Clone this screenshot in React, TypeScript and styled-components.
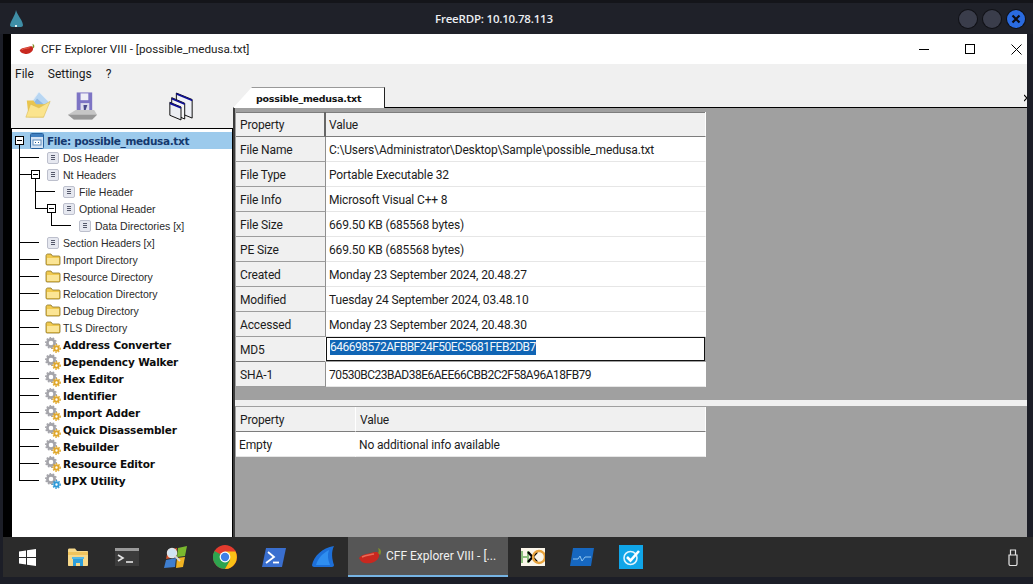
import { FC } from 'react';
import styled, { createGlobalStyle } from 'styled-components';

const GlobalStyle = createGlobalStyle`
  html, body {
    margin: 0;
    padding: 0;
    width: 1033px;
    height: 584px;
    overflow: hidden;
    background-color: #1c1e27;
  }
`;

const Screen = styled.div`
  width: 1033px;
  height: 584px;
  display: flex;
  flex-direction: column;
  background-color: #1c1e27;
  font-family: Roboto, 'Liberation Sans', sans-serif;
`;

const RdpBar = styled.header`
  height: 34px;
  flex-shrink: 0;
  display: grid;
  grid-template-columns: 425px auto 1fr;
  align-items: center;
  padding: 0 8px 0 10px;
  background-color: #1f2129;
  border-top: 3px solid #14151a;
  box-sizing: border-box;
`;

const RdpTitle = styled.div`
  color: #eceef2;
  font-family: 'Open Sans', sans-serif;
  font-size: 11.5px;
  font-weight: 600;
  letter-spacing: -0.2px;
`;

const RdpButtons = styled.div`
  display: flex;
  justify-content: flex-end;
  gap: 6px;
`;

const RdpButton = styled.div<{ $close?: boolean }>`
  width: 18px;
  height: 18px;
  border-radius: 50%;
  display: flex;
  align-items: center;
  justify-content: center;
  background-color: ${(p) => (p.$close ? '#2a6be0' : '#3a3d4b')};
  box-shadow: 0 0 0 1px #101116;
`;

const Middle = styled.div`
  height: 503px;
  flex-shrink: 0;
  display: flex;
`;

const LeftEdge = styled.div`
  width: 11px;
  background: linear-gradient(to right, #1c1e27 3px, #000 3px);
`;

const RightEdge = styled.div`
  width: 6px;
  background-color: #1c1e27;
`;

const AppWindow = styled.div`
  flex: 1;
  min-width: 0;
  display: flex;
  flex-direction: column;
  background-color: #f0f0f0;
  overflow: hidden;
`;

const TitleBar = styled.div`
  height: 30px;
  flex-shrink: 0;
  display: flex;
  align-items: center;
  padding-left: 8px;
  margin-right: -12px;
  background-color: #fff;
`;

const TitleText = styled.div`
  margin-left: 6px;
  flex: 1;
  font-size: 11.7px;
  color: #222;
`;

const WinButton = styled.div`
  width: 46px;
  height: 30px;
  display: flex;
  align-items: center;
  justify-content: center;
`;

const MenuBar = styled.nav`
  height: 20px;
  flex-shrink: 0;
  display: flex;
  align-items: center;
  gap: 14px;
  padding-left: 4px;
  font-size: 12px;
  color: #1a1a1a;
`;

const Body = styled.div`
  flex: 1;
  min-height: 0;
  display: flex;
`;

const LeftColumn = styled.div`
  width: 222px;
  flex-shrink: 0;
  display: flex;
  flex-direction: column;
`;

const Toolbar = styled.div`
  height: 44px;
  flex-shrink: 0;
  display: flex;
  align-items: center;
  padding-left: 13px;
  gap: 15px;
`;

const ToolSpacer = styled.div`
  width: 40px;
`;

const Tree = styled.div`
  flex: 1;
  background-color: #fff;
  border-top: 1px solid #000;
  border-left: 1px solid #000;
  border-right: 1px solid #000;
  padding-top: 3px;
  font-family: 'DejaVu Sans', sans-serif;
`;

const TreeRow = styled.div<{ $selected?: boolean }>`
  height: 17px;
  display: flex;
  align-items: center;
  background-color: ${(p) => (p.$selected ? '#9ccaec' : 'transparent')};
`;

const Guide = styled.span<{ $up?: boolean; $down?: boolean; $right?: boolean; $half?: boolean }>`
  position: relative;
  flex-shrink: 0;
  width: 16px;
  height: 17px;

  &::before {
    content: '';
    display: ${(p) => (p.$up || p.$down ? 'block' : 'none')};
    position: absolute;
    left: 7px;
    width: 1px;
    top: ${(p) => (p.$up ? '0' : '8px')};
    bottom: ${(p) => (p.$down ? '0' : '8px')};
    background-color: #000;
  }

  &::after {
    content: '';
    display: ${(p) => (p.$right || p.$half ? 'block' : 'none')};
    position: absolute;
    top: 8px;
    height: 1px;
    left: ${(p) => (p.$half ? '0' : '7px')};
    right: ${(p) => (p.$half ? '5px' : '0')};
    background-color: #000;
  }
`;

const Expander = styled.span`
  position: absolute;
  z-index: 1;
  left: 3px;
  top: 4px;
  width: 9px;
  height: 9px;
  box-sizing: border-box;
  border: 1px solid #000;
  background-color: #fff;

  &::after {
    content: '';
    position: absolute;
    left: 1px;
    right: 1px;
    top: 3px;
    height: 1px;
    background-color: #000;
  }
`;

const PlainLabel = styled.span`
  margin-left: 2px;
  white-space: nowrap;
  font-family: 'Liberation Sans', sans-serif;
  font-size: 10.5px;
  color: #2a2a2a;
`;

const ToolLabel = styled.span`
  margin-left: 2px;
  white-space: nowrap;
  font-size: 10.5px;
  font-weight: 700;
  letter-spacing: -0.15px;
  color: #0c0c0c;
`;

const RootLabel = styled.span`
  margin-left: 3px;
  white-space: nowrap;
  font-size: 10.5px;
  font-weight: 700;
  letter-spacing: -0.35px;
  color: #14386e;
`;

const RightColumn = styled.div`
  flex: 1;
  min-width: 0;
  display: flex;
  flex-direction: column;
`;

const TabStrip = styled.div`
  height: 24px;
  flex-shrink: 0;
  position: relative;
  display: flex;
  align-items: flex-end;
  border-bottom: 1px solid #000;
  box-sizing: border-box;
`;

const Tab = styled.div`
  width: 152px;
  height: 21px;
  margin-bottom: -1px;
  box-sizing: border-box;
  display: flex;
  align-items: center;
  padding: 1px 0 0 23px;
  font-family: 'DejaVu Sans', sans-serif;
  font-size: 9.5px;
  font-weight: 700;
  letter-spacing: -0.25px;
  color: #111;
  background-color: #fff;
  border-right: 1px solid #222;
  border-top: 1px solid #999;
  clip-path: polygon(0 100%, 19px 0, 100% 0, 100% 100%);
`;

const TabArrow = styled.span`
  position: absolute;
  right: 0;
  top: 10px;
  display: flex;
`;

const Panes = styled.div`
  flex: 1;
  min-height: 0;
  display: flex;
  flex-direction: column;
  background-color: #a0a0a0;
  border-left: 2px solid #3c3c3c;
`;

const TablePane = styled.div<{ $height: number; $top: number }>`
  height: ${(p) => p.$height}px;
  flex-shrink: 0;
  box-sizing: border-box;
  padding: ${(p) => p.$top}px 0 0 1px;
`;

const Splitter = styled.div`
  height: 6px;
  flex-shrink: 0;
  background-color: #f0f0f0;
`;

const Table = styled.div<{ $first: number }>`
  width: 470px;
  display: grid;
  grid-template-columns: ${(p) => p.$first}px 1fr;
  grid-auto-rows: 25px;
  font-size: 12px;
  letter-spacing: -0.14px;
  color: #1c1c1c;
`;

const Cell = styled.div<{ $shade?: boolean; $pad?: number }>`
  display: flex;
  align-items: center;
  box-sizing: border-box;
  white-space: nowrap;
  padding-top: 1px;
  padding-left: ${(p) => p.$pad ?? 3}px;
  background-color: ${(p) => (p.$shade ? '#f0f0f0' : '#fff')};
  border-bottom: 1px solid ${(p) => (p.$shade ? '#9d9d9d' : '#e6e6e6')};
  border-right: 1px solid ${(p) => (p.$shade ? '#8f8f8f' : '#fff')};
`;

const HeadCell = styled(Cell)`
  padding-top: 2px;
  background-color: #f0f0f0;
  border-bottom-color: #7d7d7d;
`;

const TopHeadCell = styled(HeadCell)`
  box-shadow: inset 0 1px 0 #7d7d7d;
`;

const TopKeyHeadCell = styled(TopHeadCell)`
  border-right: 2px solid #666;
`;

const EditCell = styled.div`
  box-sizing: border-box;
  padding: 2px 0 0 3px;
  border: 1px solid #111;
  background-color: #fff;
  margin: 0 1px 1px 0;
  line-height: 15px;
`;

const Hash = styled.span`
  letter-spacing: -0.5px;
`;

const Selected = styled(Hash)`
  display: inline-block;
  color: #f2f6fb;
  background-color: #1065b5;
`;

const Taskbar = styled.footer`
  height: 40px;
  flex-shrink: 0;
  margin-left: 3px;
  display: flex;
  background-color: #2b2b2b;
`;

const TaskSlot = styled.div`
  width: 49px;
  height: 40px;
  flex-shrink: 0;
  display: flex;
  align-items: center;
  justify-content: center;
`;

const StartSlot = styled(TaskSlot)`
  margin-right: 1px;
`;

const ActiveTask = styled.div`
  width: 160px;
  height: 40px;
  margin-left: 1px;
  flex-shrink: 0;
  box-sizing: border-box;
  display: flex;
  align-items: center;
  gap: 4px;
  padding-left: 10px;
  background-color: #565656;
  border-bottom: 2px solid #76b4e4;
  color: #f1f1f1;
  font-size: 12px;
  white-space: nowrap;
`;

const TaskTray = styled.div`
  flex: 1;
  display: flex;
  justify-content: flex-end;
  align-items: center;
  padding-right: 14px;
`;

const BottomEdge = styled.div`
  flex: 1;
  background-color: #1c1e27;
`;

const Chili: FC<{ size?: number }> = ({ size = 16 }) => (
  <svg width={size} height={size * 0.75} viewBox="0 0 24 18">
    <path d="M1 11c3-4 8-4 12-5 3-1 7-2 8 1 1 4-3 8-8 9-5 1-10 0-12-5z" fill="#c8281f" />
    <path d="M4 10c4-2 8-2 12-3" stroke="#ea6a55" strokeWidth="1.4" fill="none" />
    <path d="M20 6c1-1 1-3 0-5 3 1 4 4 2 7z" fill="#7f8f2c" />
  </svg>
);

const OpenFolder: FC = () => (
  <svg width="28" height="32" viewBox="0 0 30 32">
    <path d="M16 1l12 12-10 11L8 12z" fill="#b8d6f2" stroke="#e0ecf8" />
    <path d="M14 8l7 6-5 5-6-6z" fill="#8fb8e4" />
    <path d="M3 10h7l3 4h10l-2 14H5z" fill="#e9c54e" />
    <path d="M2 28l5-14 9 4 12-7-7 17z" fill="#fbe48d" stroke="#d9b94f" strokeWidth="0.6" />
  </svg>
);

const SaveDisk: FC = () => (
  <svg width="31" height="30" viewBox="0 0 32 30">
    <path d="M10 1h16v21H10z" fill="#7d74c4" />
    <path d="M14 2h8v7h-8z" fill="#eeeef6" />
    <path d="M14 12h9v10h-9z" fill="#dcdcec" />
    <path d="M17 14h4l-2 6h-1.500z" fill="#4a4a8c" />
    <path d="M1 24l8-5h19l3 5-5 5H7z" fill="#c6c6c6" />
    <path d="M7 29l-6-5h30l-5 5z" fill="#979797" />
  </svg>
);

const Windows: FC = () => (
  <svg width="26" height="30" viewBox="0 0 28 32">
    <g stroke="#000" strokeWidth="1" fill="#eef0f6">
      <path d="M9 2l17 7v20L9 22z" />
      <path d="M4 7l14 6v17L4 24z" fill="#f4f4f6" />
      <path d="M2 12l12 5v14L2 26z" fill="#eceef2" />
    </g>
    <path d="M9 2l17 7v2L9 4zM4 7l14 6v2L4 9zM2 12l12 5v2L2 14z" fill="#0c0c96" />
  </svg>
);

const RootDoc: FC = () => (
  <svg width="14" height="16" viewBox="0 0 14 16">
    <rect x="0.5" y="0.5" width="13" height="15" rx="1" fill="#d4e3f4" stroke="#27609c" />
    <rect x="1" y="1" width="12" height="3" fill="#3f7fc0" />
    <rect x="3" y="7" width="8" height="5" fill="#fff" stroke="#5f8cbc" />
    <path d="M5 9.500h1M8 9.500h1" stroke="#27609c" />
  </svg>
);

const DocIcon: FC = () => (
  <svg width="12" height="12" viewBox="0 0 12 12">
    <rect x="0.5" y="0.5" width="11" height="11" rx="1.5" fill="#e6e8f0" stroke="#bcbfcc" />
    <path d="M4 3.500h4M4 5.500h4M4 7.500h4" stroke="#54586a" />
  </svg>
);

const FolderIcon: FC = () => (
  <svg width="16" height="13" viewBox="0 0 16 13">
    <path d="M1 3c0-1 .5-2 1.500-2H6l1.500 2H14c.7 0 1 .5 1 1v7c0 .7-.5 1-1 1H2c-.6 0-1-.4-1-1z" fill="#f0c94e" stroke="#8a7426" strokeWidth="0.8" />
    <path d="M2 5h12v6H2z" fill="#fbe595" />
  </svg>
);

const GearIcon: FC<{ blue?: boolean }> = ({ blue }) => (
  <svg width="16" height="16" viewBox="0 0 16 16">
    <circle cx="6" cy="6" r="3.600" fill="none" stroke="#a4a4aa" strokeWidth="2.600" />
    <circle cx="6" cy="6" r="5.200" fill="none" stroke="#a4a4aa" strokeWidth="1.500" strokeDasharray="1.600 1.600" />
    <circle cx="11.500" cy="11.500" r="2.200" fill="none" stroke={blue ? '#2f9ad8' : '#e0a82c'} strokeWidth="2" />
    <circle cx="11.500" cy="11.500" r="3.800" fill="none" stroke={blue ? '#2f9ad8' : '#e0a82c'} strokeWidth="1.200" strokeDasharray="1.400 1.400" />
  </svg>
);

const IconSlot = styled.span`
  width: 16px;
  display: flex;
  justify-content: center;
  flex-shrink: 0;
  margin-left: 1px;
`;

const RootIconSlot = styled.span`
  display: flex;
  flex-shrink: 0;
  margin-left: 2px;
`;

type GuideKind = 'pipe' | 'tee' | 'last' | 'dash' | 'empty' | 'rootBox' | 'box';

const GuideCell: FC<{ kind: GuideKind }> = ({ kind }) => {
  switch (kind) {
    case 'pipe':
      return <Guide $up $down />;
    case 'tee':
      return <Guide $up $down $right />;
    case 'last':
      return <Guide $up $right />;
    case 'dash':
      return <Guide $half />;
    case 'rootBox':
      return (
        <Guide $down>
          <Expander />
        </Guide>
      );
    case 'box':
      return (
        <Guide $down $half>
          <Expander />
        </Guide>
      );
    default:
      return <Guide />;
  }
};

type Node = {
  label: string;
  guides: GuideKind[];
  icon: 'doc' | 'folder' | 'gear' | 'blueGear';
};

const nodes: Node[] = [
  { label: 'Dos Header', guides: ['tee', 'dash'], icon: 'doc' },
  { label: 'Nt Headers', guides: ['tee', 'box'], icon: 'doc' },
  { label: 'File Header', guides: ['pipe', 'tee', 'dash'], icon: 'doc' },
  { label: 'Optional Header', guides: ['pipe', 'last', 'box'], icon: 'doc' },
  { label: 'Data Directories [x]', guides: ['pipe', 'empty', 'last', 'dash'], icon: 'doc' },
  { label: 'Section Headers [x]', guides: ['tee', 'dash'], icon: 'doc' },
  { label: 'Import Directory', guides: ['tee', 'dash'], icon: 'folder' },
  { label: 'Resource Directory', guides: ['tee', 'dash'], icon: 'folder' },
  { label: 'Relocation Directory', guides: ['tee', 'dash'], icon: 'folder' },
  { label: 'Debug Directory', guides: ['tee', 'dash'], icon: 'folder' },
  { label: 'TLS Directory', guides: ['tee', 'dash'], icon: 'folder' },
  { label: 'Address Converter', guides: ['tee', 'dash'], icon: 'gear' },
  { label: 'Dependency Walker', guides: ['tee', 'dash'], icon: 'gear' },
  { label: 'Hex Editor', guides: ['tee', 'dash'], icon: 'gear' },
  { label: 'Identifier', guides: ['tee', 'dash'], icon: 'gear' },
  { label: 'Import Adder', guides: ['tee', 'dash'], icon: 'gear' },
  { label: 'Quick Disassembler', guides: ['tee', 'dash'], icon: 'gear' },
  { label: 'Rebuilder', guides: ['tee', 'dash'], icon: 'gear' },
  { label: 'Resource Editor', guides: ['tee', 'dash'], icon: 'gear' },
  { label: 'UPX Utility', guides: ['last', 'dash'], icon: 'blueGear' },
];

const NodeIcon: FC<{ icon: Node['icon'] }> = ({ icon }) => (
  <IconSlot>
    {icon === 'doc' && <DocIcon />}
    {icon === 'folder' && <FolderIcon />}
    {icon === 'gear' && <GearIcon />}
    {icon === 'blueGear' && <GearIcon blue />}
  </IconSlot>
);

const fileRows = [
  ['File Name', 'C:\\Users\\Administrator\\Desktop\\Sample\\possible_medusa.txt'],
  ['File Type', 'Portable Executable 32'],
  ['File Info', 'Microsoft Visual C++ 8'],
  ['File Size', '669.50 KB (685568 bytes)'],
  ['PE Size', '669.50 KB (685568 bytes)'],
  ['Created', 'Monday 23 September 2024, 20.48.27'],
  ['Modified', 'Tuesday 24 September 2024, 03.48.10'],
  ['Accessed', 'Monday 23 September 2024, 20.48.30'],
];

const StartIcon: FC = () => (
  <svg width="17" height="17" viewBox="0 0 17 17">
    <path d="M0 2.400l7-1v6.600H0zM8 1.200L17 0v8H8zM0 9h7v6.600l-7-1zM8 9h9v8l-9-1.200z" fill="#fff" />
  </svg>
);

const ExplorerIcon: FC = () => (
  <svg width="22" height="20" viewBox="0 0 22 20">
    <path d="M1 3c0-1 .5-1.500 1.500-1.500H8L10 4h10c.7 0 1 .4 1 1v13c0 .7-.4 1-1 1H2c-.7 0-1-.4-1-1z" fill="#f7d98a" />
    <path d="M1 5h20v3H1z" fill="#f0c45e" />
    <path d="M6 12h10v7h-3v-3H9v3H6z" fill="#2e9fdb" />
    <path d="M5 10h12v2H5z" fill="#55b8e8" />
  </svg>
);

const TerminalIcon: FC = () => (
  <svg width="24" height="18" viewBox="0 0 24 18">
    <rect width="24" height="18" fill="#3c3c3c" />
    <rect width="24" height="3" fill="#9a9a9a" />
    <path d="M3 7l5 3-5 3" stroke="#e6e6e6" strokeWidth="1.600" fill="none" />
    <path d="M11 14h7" stroke="#e6e6e6" strokeWidth="1.600" />
  </svg>
);

const ProcessIcon: FC = () => (
  <svg width="24" height="26" viewBox="0 0 24 26">
    <path d="M4 6l9-2-1 9-10 2z" fill="#d8552c" />
    <path d="M14 4l9-2-2 10-8 1z" fill="#7ab82e" />
    <path d="M2 16l10-2-1 9-11 1z" fill="#3f7fd0" />
    <path d="M13 14l8-1-2 10-7 1z" fill="#f0b323" />
    <circle cx="8" cy="9" r="4.500" fill="#cfe4f5" stroke="#dfe3e8" strokeWidth="1.400" />
    <path d="M11 12l5 5" stroke="#d9d9d9" strokeWidth="2" />
  </svg>
);

const ChromeIcon: FC = () => (
  <svg width="24" height="24" viewBox="0 0 24 24">
    <circle cx="12" cy="12" r="12" fill="#e33b2e" />
    <path d="M12 12L1.600 6A12 12 0 0 0 12 24l5.200-9z" fill="#2ea44f" />
    <path d="M12 6.500h10.500A12 12 0 0 1 12 24l5.200-9z" fill="#fbc116" />
    <circle cx="12" cy="12" r="5.400" fill="#fff" />
    <circle cx="12" cy="12" r="4.200" fill="#3f7fe6" />
  </svg>
);

const PowerShellIcon: FC = () => (
  <svg width="24" height="19" viewBox="0 0 24 19">
    <path d="M4 0h20l-4 19H0z" fill="#3a6fcf" />
    <path d="M6 4l6 5-8 6" stroke="#fff" strokeWidth="1.800" fill="none" />
    <path d="M11 14.500h6" stroke="#fff" strokeWidth="1.800" />
  </svg>
);

const SharkIcon: FC = () => (
  <svg width="24" height="24" viewBox="0 0 24 24">
    <path d="M1 20C3 11 11 3 23 1c-3 6-2 13 0 19 0 1-1 2-2 2H3c-1 0-2-1-2-2z" fill="#1d6fd8" />
    <path d="M5 20C7 13 12 8 18 5c-2 5-1 10 1 15z" fill="#2f8ef0" />
  </svg>
);

const RdpLogo: FC = () => (
  <svg width="13" height="17" viewBox="0 0 13 17">
    <path d="M6 0c1 5 6 9 7 15 0 1-1 2-2 2H2c-1 0-2-1-2-2 1-5 5-9 6-15z" fill="#3f8ea6" />
    <path d="M5 15h2v2H5z" fill="#e4eef2" />
  </svg>
);

const HxdIcon: FC = () => (
  <svg width="24" height="18" viewBox="0 0 24 18">
    <rect width="24" height="18" fill="#fbf6ea" />
    <path d="M1 3v12M7 3v12M1 9h6" stroke="#8dbf7e" strokeWidth="2" />
    <path d="M7 4l9 10M16 4L7 14" stroke="#000" strokeWidth="2.400" />
    <circle cx="18" cy="9" r="6" fill="none" stroke="#e8a33d" strokeWidth="2.400" />
  </svg>
);

const MonitorIcon: FC = () => (
  <svg width="24" height="18" viewBox="0 0 24 18">
    <path d="M3 0h21l-3 18H0z" fill="#1667c0" />
    <path d="M3 11h5l2-3 2 5 3-4h6" stroke="#8cc4f0" strokeWidth="1" fill="none" />
  </svg>
);

const CheckIcon: FC = () => (
  <svg width="24" height="24" viewBox="0 0 24 24">
    <rect width="24" height="24" fill="#10a5e8" />
    <circle cx="11.500" cy="13" r="6.500" fill="none" stroke="#dff3fc" strokeWidth="1.600" />
    <path d="M8 12l3.500 3.500L20 6" stroke="#fff" strokeWidth="2.600" fill="none" />
  </svg>
);

const UsbIcon: FC = () => (
  <svg width="12" height="17" viewBox="0 0 12 17">
    <path d="M3.500 1h5v5h-5zM2 6h8v9c0 1-.5 1.500-1.500 1.500h-5C2.500 16.500 2 16 2 15z" fill="none" stroke="#e4e4e4" strokeWidth="1.200" />
  </svg>
);

const App: FC = () => (
  <Screen>
    <GlobalStyle />
    <RdpBar>
      <RdpLogo />
      <RdpTitle>FreeRDP: 10.10.78.113</RdpTitle>
      <RdpButtons>
        <RdpButton />
        <RdpButton />
        <RdpButton $close>
          <svg width="10" height="10" viewBox="0 0 10 10">
            <path d="M1.500 1.500l7 7M8.500 1.500l-7 7" stroke="#0c0c14" strokeWidth="2.200" />
          </svg>
        </RdpButton>
      </RdpButtons>
    </RdpBar>
    <Middle>
      <LeftEdge />
      <AppWindow>
        <TitleBar>
          <Chili size={16} />
          <TitleText>CFF Explorer VIII - [possible_medusa.txt]</TitleText>
          <WinButton>
            <svg width="10" height="1" viewBox="0 0 10 1"><path d="M0 .5h10" stroke="#000" /></svg>
          </WinButton>
          <WinButton>
            <svg width="10" height="10" viewBox="0 0 10 10"><rect x=".5" y=".5" width="9" height="9" fill="none" stroke="#000" /></svg>
          </WinButton>
          <WinButton>
            <svg width="11" height="11" viewBox="0 0 11 11"><path d="M.5.500l10 10M10.500.500l-10 10" stroke="#000" /></svg>
          </WinButton>
        </TitleBar>
        <MenuBar>
          <span>File</span>
          <span>Settings</span>
          <span>?</span>
        </MenuBar>
        <Body>
          <LeftColumn>
            <Toolbar>
              <OpenFolder />
              <SaveDisk />
              <ToolSpacer />
              <Windows />
            </Toolbar>
            <Tree>
              <TreeRow $selected>
                <GuideCell kind="rootBox" />
                <RootIconSlot><RootDoc /></RootIconSlot>
                <RootLabel>File: possible_medusa.txt</RootLabel>
              </TreeRow>
              {nodes.map((node) => (
                <TreeRow key={node.label}>
                  {node.guides.map((kind, i) => (
                    <GuideCell key={i} kind={kind} />
                  ))}
                  <NodeIcon icon={node.icon} />
                  {node.icon === 'doc' || node.icon === 'folder' ? (
                    <PlainLabel>{node.label}</PlainLabel>
                  ) : (
                    <ToolLabel>{node.label}</ToolLabel>
                  )}
                </TreeRow>
              ))}
            </Tree>
          </LeftColumn>
          <RightColumn>
            <TabStrip>
              <Tab>possible_medusa.txt</Tab>
              <TabArrow>
                <svg width="3" height="8" viewBox="0 0 3 8">
                  <path d="M0 1l3 3-3 3" stroke="#000" strokeWidth="1.200" fill="none" />
                </svg>
              </TabArrow>
            </TabStrip>
            <Panes>
              <TablePane $height={292} $top={4}>
                <Table $first={90}>
                  <TopKeyHeadCell $pad={4}>Property</TopKeyHeadCell>
                  <TopHeadCell>Value</TopHeadCell>
                  {fileRows.map(([name, value]) => [
                    <Cell $shade $pad={4} key={name}>{name}</Cell>,
                    <Cell key={value + name}>{value}</Cell>,
                  ])}
                  <HeadCell $pad={4}>MD5</HeadCell>
                  <EditCell><Selected>646698572AFBBF24F50EC5681FEB2DB7</Selected></EditCell>
                  <Cell $shade $pad={4}>SHA-1</Cell>
                  <Cell><Hash>70530BC23BAD38E6AEE66CBB2C2F58A96A18FB79</Hash></Cell>
                </Table>
              </TablePane>
              <Splitter />
              <TablePane $height={100} $top={1}>
                <Table $first={120}>
                  <HeadCell $pad={4}>Property</HeadCell>
                  <HeadCell $pad={4}>Value</HeadCell>
                  <Cell>Empty</Cell>
                  <Cell>No additional info available</Cell>
                </Table>
              </TablePane>
            </Panes>
          </RightColumn>
        </Body>
      </AppWindow>
      <RightEdge />
    </Middle>
    <Taskbar>
      <StartSlot><StartIcon /></StartSlot>
      <TaskSlot><ExplorerIcon /></TaskSlot>
      <TaskSlot><TerminalIcon /></TaskSlot>
      <TaskSlot><ProcessIcon /></TaskSlot>
      <TaskSlot><ChromeIcon /></TaskSlot>
      <TaskSlot><PowerShellIcon /></TaskSlot>
      <TaskSlot><SharkIcon /></TaskSlot>
      <ActiveTask>
        <Chili size={24} />
        CFF Explorer VIII - [...
      </ActiveTask>
      <TaskSlot><HxdIcon /></TaskSlot>
      <TaskSlot><MonitorIcon /></TaskSlot>
      <TaskSlot><CheckIcon /></TaskSlot>
      <TaskTray><UsbIcon /></TaskTray>
    </Taskbar>
    <BottomEdge />
  </Screen>
);

export default App;
